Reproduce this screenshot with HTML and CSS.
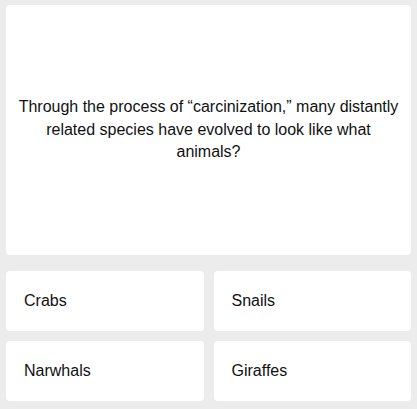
FILE: index.html
```html
<!DOCTYPE html>
<html lang="en">
<head>
<meta charset="utf-8">
<title>Quiz</title>
<link rel="stylesheet" href="styles.css">
</head>
<body>
<main class="quiz">
  <section class="question">
    <p class="question-text">Through the process of “carcinization,” many distantly related species have evolved to look like what animals?</p>
  </section>
  <div class="answers">
    <button class="answer">Crabs</button>
    <button class="answer">Snails</button>
    <button class="answer">Narwhals</button>
    <button class="answer">Giraffes</button>
  </div>
</main>
</body>
</html>
```
FILE: styles.css
```css
html, body {
  margin: 0;
  padding: 0;
  background: #ececec;
}
body {
  font-family: "Liberation Sans", Arial, sans-serif;
  color: #111;
}
.quiz {
  padding: 5px 6px 8px 6px;
  display: flex;
  flex-direction: column;
  gap: 16px;
}
.question {
  background: #fff;
  border-radius: 4px;
  height: 250px;
  display: flex;
  align-items: center;
  justify-content: center;
  padding: 0 10px;
  box-sizing: border-box;
}
.question-text {
  margin: 0;
  font-size: 16px;
  line-height: 22.4px;
  text-align: center;
}
.answers {
  display: grid;
  grid-template-columns: 1fr 1fr;
  gap: 10px;
}
.answer {
  background: #fff;
  border: none;
  border-radius: 4px;
  height: 60px;
  padding: 0 18px;
  text-align: left;
  font-family: inherit;
  font-size: 16px;
  color: #111;
}
```
